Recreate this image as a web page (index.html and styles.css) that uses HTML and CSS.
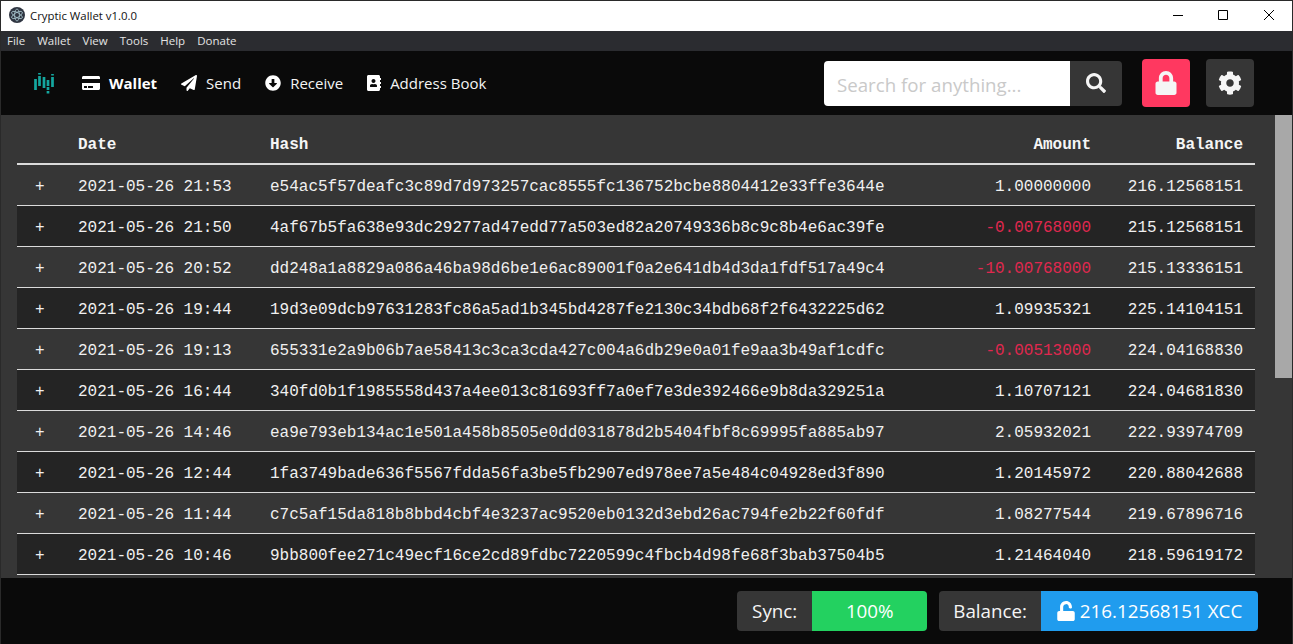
FILE: index.html
```html
<!DOCTYPE html>
<html lang="en">
<head>
<meta charset="utf-8">
<title>Cryptic Wallet v1.0.0</title>
<link rel="stylesheet" href="styles.css">
</head>
<body>
<div class="window">
  <header class="titlebar">
    <svg class="app-icon" viewBox="0 0 16 16"><circle cx="8" cy="8" r="8" fill="#2f3541"/><g fill="none" stroke="#a9c6cf" stroke-width=".8"><ellipse cx="8" cy="8" rx="6" ry="2.4" transform="rotate(30 8 8)"/><ellipse cx="8" cy="8" rx="6" ry="2.4" transform="rotate(90 8 8)"/><ellipse cx="8" cy="8" rx="6" ry="2.4" transform="rotate(150 8 8)"/></g></svg>
    <span class="app-title">Cryptic Wallet v1.0.0</span>
    <div class="win-controls">
      <svg viewBox="0 0 10 10"><path d="M0 5.5h10" stroke="#000" fill="none"/></svg>
      <svg viewBox="0 0 10 10"><path d="M.5.5h9v9h-9z" stroke="#000" fill="none"/></svg>
      <svg viewBox="0 0 10 10"><path d="M0 0l10 10M10 0L0 10" stroke="#000" fill="none"/></svg>
    </div>
  </header>
  <nav class="menubar">
    <span>File</span><span>Wallet</span><span>View</span><span>Tools</span><span>Help</span><span>Donate</span>
  </nav>
  <div class="navbar">
    <svg class="logo" viewBox="0 0 22 22"><g fill="none" stroke="#14a79f" stroke-width="2.7"><path d="M2.500 7v11M6.500 1v1.500M6.500 4v10M11 5v11M15 8v6M15 15v3M15 19v2.500M19.500 2v1.500M19.500 5v10"/></g></svg>
    <a class="nav-item active"><svg class="ico-wallet" viewBox="0 0 576 512"><path d="M0 432c0 26.500 21.500 48 48 48h480c26.500 0 48-21.500 48-48V256H0v176zm192-68c0-6.600 5.400-12 12-12h136c6.600 0 12 5.400 12 12v40c0 6.600-5.400 12-12 12H204c-6.600 0-12-5.400-12-12v-40zm-128 0c0-6.600 5.400-12 12-12h72c6.600 0 12 5.400 12 12v40c0 6.600-5.400 12-12 12H76c-6.600 0-12-5.400-12-12v-40zM576 80v48H0V80c0-26.500 21.500-48 48-48h480c26.500 0 48 21.500 48 48z"/></svg>Wallet</a>
    <a class="nav-item"><svg class="ico" viewBox="0 0 512 512"><path d="M476 3.200L12.500 270.600c-18.100 10.400-15.800 35.600 2.200 43.200L121 358.400l287.300-253.200c5.500-4.900 13.300 2.600 8.600 8.300L176 407v80.500c0 23.600 28.500 32.900 42.500 15.800L282 426l124.600 52.200c14.200 6 30.400-2.900 33-18.200l72-432C515 7.800 493.300-6.800 476 3.200z"/></svg>Send</a>
    <a class="nav-item"><svg class="ico" viewBox="0 0 512 512"><path d="M504 256c0 137-111 248-248 248S8 393 8 256 119 8 256 8s248 111 248 248zM212 140v116h-70.900c-10.700 0-16.100 13-8.500 20.500l114.900 114.300c4.700 4.700 12.200 4.700 16.900 0l114.900-114.300c7.600-7.600 2.200-20.500-8.500-20.500H300V140c0-6.600-5.400-12-12-12h-64c-6.600 0-12 5.400-12 12z"/></svg>Receive</a>
    <a class="nav-item"><svg class="ico-book" viewBox="0 0 448 512"><path d="M436 160c6.600 0 12-5.400 12-12v-40c0-6.600-5.400-12-12-12h-20V48c0-26.500-21.500-48-48-48H48C21.500 0 0 21.500 0 48v416c0 26.500 21.500 48 48 48h320c26.500 0 48-21.500 48-48v-48h20c6.600 0 12-5.400 12-12v-40c0-6.600-5.400-12-12-12h-20v-64h20c6.600 0 12-5.400 12-12v-40c0-6.600-5.400-12-12-12h-20v-64h20zm-228-32c35.300 0 64 28.700 64 64s-28.700 64-64 64-64-28.700-64-64 28.700-64 64-64zm112 236.800c0 10.600-10 19.200-22.400 19.200H118.400C106 384 96 375.400 96 364.800v-19.200c0-31.800 30.100-57.600 67.200-57.600h5c12.300 5.100 25.700 8 39.800 8s27.600-2.900 39.800-8h5c37.100 0 67.200 25.800 67.200 57.600v19.200z"/></svg>Address Book</a>
    <div class="nav-end">
      <div class="search">
        <input class="search-input" type="text" placeholder="Search for anything...">
        <button class="search-btn"><svg viewBox="0 0 512 512"><path d="M505 442.700L405.300 343c-4.500-4.500-10.600-7-17-7H372c27.600-35.300 44-79.700 44-128C416 93.100 322.900 0 208 0S0 93.100 0 208s93.100 208 208 208c48.300 0 92.700-16.400 128-44v16.300c0 6.400 2.500 12.500 7 17l99.700 99.700c9.400 9.400 24.600 9.400 33.900 0l28.300-28.300c9.400-9.400 9.400-24.600.1-34zM208 336c-70.700 0-128-57.200-128-128 0-70.700 57.200-128 128-128 70.700 0 128 57.200 128 128 0 70.700-57.200 128-128 128z"/></svg></button>
      </div>
      <button class="square-btn danger"><svg viewBox="0 0 448 512"><path d="M400 224h-24v-72C376 68.200 307.800 0 224 0S72 68.200 72 152v72H48c-26.500 0-48 21.500-48 48v192c0 26.500 21.500 48 48 48h352c26.500 0 48-21.500 48-48V272c0-26.500-21.500-48-48-48zm-104 0H152v-72c0-39.700 32.300-72 72-72s72 32.300 72 72v72z"/></svg></button>
      <button class="square-btn dark"><svg viewBox="0 0 512 512"><path d="M487.400 315.700l-42.600-24.600c4.300-23.200 4.300-47 0-70.200l42.600-24.600c4.900-2.800 7.100-8.600 5.500-14-11.100-35.600-30-67.800-54.700-94.600-3.800-4.100-10-5.100-14.800-2.300L380.800 110c-17.900-15.400-38.500-27.300-60.800-35.100V25.800c0-5.600-3.900-10.500-9.400-11.700-36.700-8.200-74.300-7.800-109.200 0-5.500 1.200-9.400 6.100-9.400 11.700V75c-22.200 7.900-42.800 19.800-60.800 35.100L88.700 85.500c-4.900-2.800-11-1.900-14.800 2.300-24.700 26.700-43.600 58.900-54.700 94.600-1.700 5.400.6 11.200 5.500 14L67.300 221c-4.300 23.200-4.300 47 0 70.200l-42.600 24.600c-4.900 2.800-7.100 8.600-5.500 14 11.100 35.600 30 67.800 54.700 94.600 3.800 4.100 10 5.100 14.800 2.300l42.600-24.600c17.900 15.400 38.500 27.300 60.800 35.100v49.200c0 5.600 3.900 10.500 9.400 11.700 36.700 8.200 74.300 7.800 109.200 0 5.500-1.200 9.400-6.100 9.400-11.700v-49.200c22.200-7.900 42.800-19.800 60.800-35.100l42.600 24.600c4.900 2.800 11 1.900 14.800-2.300 24.700-26.700 43.600-58.900 54.700-94.600 1.500-5.500-.7-11.300-5.600-14.100zM256 336c-44.100 0-80-35.900-80-80s35.900-80 80-80 80 35.900 80 80-35.900 80-80 80z"/></svg></button>
    </div>
  </div>
  <main class="content">
    <div class="table-wrap">
      <table class="tx">
        <colgroup><col class="c-plus"><col class="c-date"><col class="c-hash"><col class="c-amount"><col class="c-balance"></colgroup>
        <thead><tr><th></th><th>Date</th><th>Hash</th><th class="num">Amount</th><th class="num">Balance</th></tr></thead>
        <tbody>
          <tr><td class="plus">+</td><td>2021-05-26 21:53</td><td>e54ac5f57deafc3c89d7d973257cac8555fc136752bcbe8804412e33ffe3644e</td><td class="num">1.00000000</td><td class="num">216.12568151</td></tr>
          <tr><td class="plus">+</td><td>2021-05-26 21:50</td><td>4af67b5fa638e93dc29277ad47edd77a503ed82a20749336b8c9c8b4e6ac39fe</td><td class="num neg">-0.00768000</td><td class="num">215.12568151</td></tr>
          <tr><td class="plus">+</td><td>2021-05-26 20:52</td><td>dd248a1a8829a086a46ba98d6be1e6ac89001f0a2e641db4d3da1fdf517a49c4</td><td class="num neg">-10.00768000</td><td class="num">215.13336151</td></tr>
          <tr><td class="plus">+</td><td>2021-05-26 19:44</td><td>19d3e09dcb97631283fc86a5ad1b345bd4287fe2130c34bdb68f2f6432225d62</td><td class="num">1.09935321</td><td class="num">225.14104151</td></tr>
          <tr><td class="plus">+</td><td>2021-05-26 19:13</td><td>655331e2a9b06b7ae58413c3ca3cda427c004a6db29e0a01fe9aa3b49af1cdfc</td><td class="num neg">-0.00513000</td><td class="num">224.04168830</td></tr>
          <tr><td class="plus">+</td><td>2021-05-26 16:44</td><td>340fd0b1f1985558d437a4ee013c81693ff7a0ef7e3de392466e9b8da329251a</td><td class="num">1.10707121</td><td class="num">224.04681830</td></tr>
          <tr><td class="plus">+</td><td>2021-05-26 14:46</td><td>ea9e793eb134ac1e501a458b8505e0dd031878d2b5404fbf8c69995fa885ab97</td><td class="num">2.05932021</td><td class="num">222.93974709</td></tr>
          <tr><td class="plus">+</td><td>2021-05-26 12:44</td><td>1fa3749bade636f5567fdda56fa3be5fb2907ed978ee7a5e484c04928ed3f890</td><td class="num">1.20145972</td><td class="num">220.88042688</td></tr>
          <tr><td class="plus">+</td><td>2021-05-26 11:44</td><td>c7c5af15da818b8bbd4cbf4e3237ac9520eb0132d3ebd26ac794fe2b22f60fdf</td><td class="num">1.08277544</td><td class="num">219.67896716</td></tr>
          <tr><td class="plus">+</td><td>2021-05-26 10:46</td><td>9bb800fee271c49ecf16ce2cd89fdbc7220599c4fbcb4d98fe68f3bab37504b5</td><td class="num">1.21464040</td><td class="num">218.59619172</td></tr>
          <tr><td class="plus">&nbsp;</td><td></td><td></td><td></td><td></td></tr>
        </tbody>
      </table>
    </div>
    <div class="scrollbar"><div class="thumb"></div></div>
  </main>
  <footer class="statusbar">
    <div class="pill"><span class="pill-label">Sync:</span><span class="pill-value sync">100%</span></div>
    <div class="pill"><span class="pill-label label-balance">Balance:</span><span class="pill-value bal"><svg viewBox="0 0 448 512"><path d="M400 256H152V152.900c0-39.600 31.700-72.500 71.300-72.900 40-.4 72.700 32.100 72.700 72v16c0 13.300 10.700 24 24 24h32c13.300 0 24-10.700 24-24v-16C376 68 307.500-.3 223.500 0 139.500.3 72 69.500 72 153.500V256H48c-26.500 0-48 21.500-48 48v160c0 26.500 21.500 48 48 48h352c26.500 0 48-21.500 48-48V304c0-26.500-21.500-48-48-48z"/></svg>216.12568151 XCC</span></div>
  </footer>
</div>
</body>
</html>
```

FILE: styles.css
```css
* { box-sizing: border-box; }
html, body { margin: 0; height: 100%; overflow: hidden; }
body { font-family: "Open Sans", "Noto Sans", sans-serif; background: #0a0a0a; }
.window {
  height: 644px;
  display: flex;
  flex-direction: column;
  border: 1px solid #2a2a2a;
  border-bottom: 0;
}
.titlebar {
  height: 30px;
  flex: none;
  background: #fff;
  display: flex;
  align-items: center;
  padding: 0 0 2px 8px;
  color: #111;
}
.app-icon { width: 16px; height: 16px; margin-right: 5px; }
.app-title { font-size: 11.4px; }
.win-controls { margin-left: auto; display: flex; gap: 35px; padding-right: 18px; }
.win-controls svg { width: 10px; height: 10px; display: block; }
.win-controls svg:last-child { margin-left: 1px; }
.menubar {
  height: 20px;
  flex: none;
  background: #2b2c30;
  color: #e4e4e4;
  font-size: 11.5px;
  display: flex;
  align-items: center;
  padding: 0 0 2px 6px;
  gap: 12px;
}
.navbar {
  height: 64px;
  flex: none;
  background: #0a0a0a;
  display: flex;
  align-items: center;
  padding-left: 32px;
  color: #fff;
}
.logo { width: 22px; height: 22px; margin-right: 27px; }
.nav-item {
  display: flex;
  align-items: center;
  font-size: 15px;
  margin-right: 24px;
  color: #f4f4f4;
}
.nav-item.active { font-weight: 700; color: #fff; }
.nav-item svg { fill: #fff; height: 16px; margin-right: 9px; }
.ico { width: 16px; }
.ico-wallet { width: 18px; }
.ico-book { width: 14px; }
.nav-end { margin-left: auto; display: flex; align-items: center; padding-right: 38px; }
.search { display: flex; height: 45px; margin-right: 20px; }
.search-input {
  width: 246px;
  border: 0;
  border-radius: 4px 0 0 4px;
  background: #fff;
  font: 18.7px "Open Sans", sans-serif;
  padding: 2px 13px 0;
  outline: 0;
}
.search-input::placeholder { color: #c9c9c9; opacity: 1; }
.search-btn {
  width: 52px;
  border: 0;
  background: #363636;
  border-radius: 0 4px 4px 0;
  display: flex;
  align-items: center;
  justify-content: center;
  padding: 0;
}
.search-btn svg { width: 20px; height: 20px; fill: #f5f5f5; }
.square-btn {
  width: 48px;
  height: 48px;
  border: 0;
  border-radius: 4px;
  display: flex;
  align-items: center;
  justify-content: center;
  padding: 0;
}
.square-btn svg { width: 24px; height: 24px; fill: #f5f5f5; }
.danger { background: #ff3860; margin-right: 16px; }
.dark { background: #363636; }
.content { flex: 1; min-height: 0; display: flex; background: #363636; overflow: hidden; }
.table-wrap { flex: 1; min-width: 0; padding: 0 19px 0 16px; overflow: hidden; }
.tx {
  width: 1238px;
  table-layout: fixed;
  border-collapse: separate;
  border-spacing: 0;
  font-family: "Liberation Mono", monospace;
  font-size: 16px;
  color: #f0f0f0;
}
.c-plus { width: 49px; }
.c-date { width: 192px; }
.c-amount { width: 207px; }
.c-balance { width: 152px; }
.tx th {
  height: 50px;
  text-align: left;
  font-weight: 700;
  color: #f5f5f5;
  padding: 12px 12px 0;
  border-bottom: 2px solid #dbdbdb;
}
.tx td {
  height: 41px;
  padding: 3px 12px 0;
  white-space: nowrap;
  border-bottom: 1px solid #dbdbdb;
}
.tx tbody tr:nth-child(even) td { background: #242424; }
.tx .num { text-align: right; }
.tx .neg { color: #e0284f; }
.tx .plus { padding: 3px 0 0 18px; }
.scrollbar { width: 17px; flex: none; background: #363636; }
.thumb { height: 263px; background: #a8a8a8; }
.statusbar {
  height: 66px;
  flex: none;
  background: #0a0a0a;
  display: flex;
  justify-content: flex-end;
  align-items: flex-start;
  padding: 13px 34px 0 0;
  gap: 12px;
  font-size: 18.8px;
}
.pill { display: flex; height: 40px; border-radius: 4px; overflow: hidden; }
.pill-label {
  background: #363636;
  color: #f5f5f5;
  display: flex;
  align-items: center;
  padding: 0 15px;
}
.label-balance { padding: 0 14px; }
.pill-value { color: #fff; display: flex; align-items: center; justify-content: center; }
.sync { background: #23d160; width: 115px; }
.bal { background: #209cee; width: 217px; }
.bal svg { width: 18px; height: 20px; fill: #fff; margin-right: 5px; }
```
